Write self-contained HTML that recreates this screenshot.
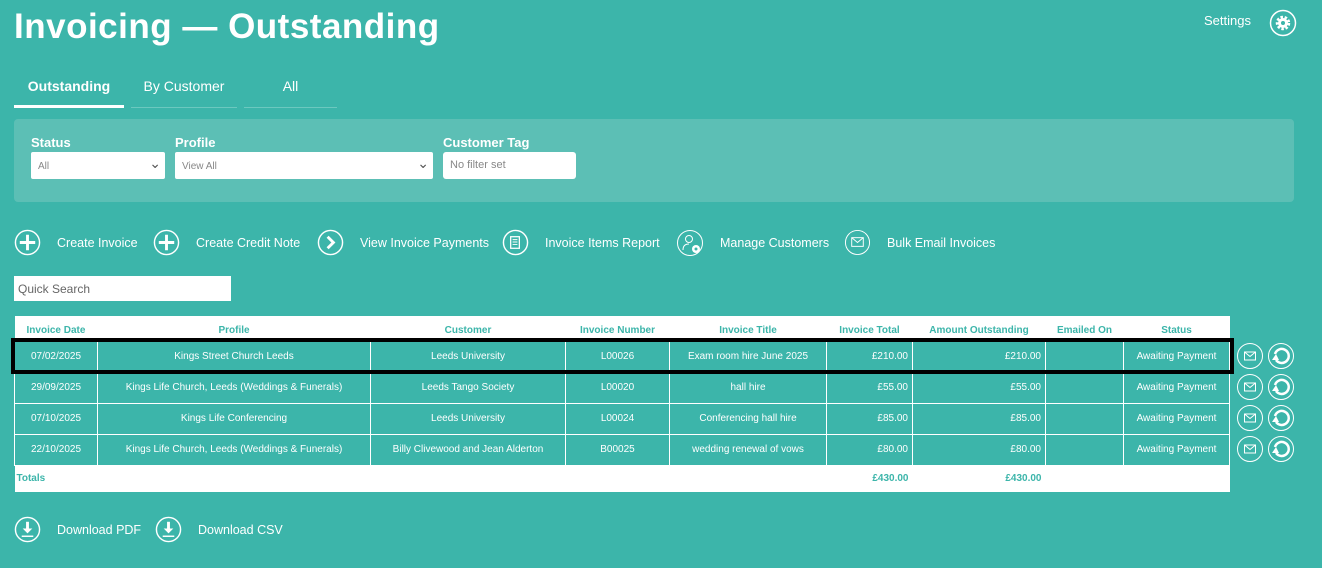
<!DOCTYPE html>
<html><head><meta charset="utf-8"><style>
*{margin:0;padding:0;box-sizing:border-box}
body{width:1322px;height:568px;background:#3cb5aa;font-family:"Liberation Sans",sans-serif;color:#fff;position:relative;overflow:hidden}
.abs{position:absolute}
h1{position:absolute;left:14px;top:7px;font-size:35px;font-weight:bold;letter-spacing:0.5px;color:#fff}
.tab{position:absolute;top:78px;font-size:14px;text-align:center;height:30px;border-bottom:1px solid #6cc8bf}
.panel{position:absolute;left:14px;top:119px;width:1280px;height:83px;background:#5cbfb5;border-radius:4px}
.lbl{position:absolute;top:135px;font-size:13px;font-weight:bold}
.sel{position:absolute;top:152px;height:27px;background:#fff;color:#888;font-size:10px;padding:9px 7px;border-radius:2px}
.act{position:absolute;top:229px;font-size:12.5px;display:flex;align-items:center}
.act svg{margin-right:16px}
table{position:absolute;left:14px;top:316px;width:1216px;border-collapse:collapse;font-size:10px}
th{background:#fff;color:#3cb5aa;font-weight:bold;height:25px;padding-top:4px}
td{border:1px solid #fff;text-align:center;height:31px;color:#fff}
td.r{text-align:right;padding-right:4px}
tr.tot td{background:#fff;color:#3cb5aa;font-weight:bold;height:27px;border:none}
</style></head><body>
<h1>Invoicing — Outstanding</h1>
<div class="abs" style="left:1204px;top:13px;font-size:13px">Settings</div>
<svg class="abs" style="left:1269px;top:9px" width="28" height="28" viewBox="0 0 28 28"><circle cx="14" cy="14" r="12.5" fill="none" stroke="#fff" stroke-width="1.5"/><circle cx="14" cy="14" r="5.5" fill="none" stroke="#fff" stroke-width="3.5" stroke-dasharray="2.3 1.6"/><circle cx="14" cy="14" r="5" fill="#fff"/><circle cx="14" cy="14" r="2" fill="#3cb5aa"/></svg>
<div class="tab" style="left:14px;width:110px;font-weight:bold;border-bottom:3px solid #fff">Outstanding</div>
<div class="tab" style="left:131px;width:106px">By Customer</div>
<div class="tab" style="left:244px;width:93px">All</div>
<div class="panel"></div>
<div class="lbl" style="left:31px">Status</div>
<div class="lbl" style="left:175px">Profile</div>
<div class="lbl" style="left:443px">Customer Tag</div>
<div class="sel" style="left:31px;width:134px">All<span style="position:absolute;right:4px;top:3px;font-size:14px;color:#555">&#8964;</span></div>
<div class="sel" style="left:175px;width:258px">View All<span style="position:absolute;right:4px;top:3px;font-size:14px;color:#555">&#8964;</span></div>
<div class="sel" style="left:443px;width:133px;font-size:11px;padding-top:7px;border-radius:3px">No filter set</div>

<div class="act" style="left:14px"><svg width="27" height="27" viewBox="0 0 28 28"><circle cx="14" cy="14" r="12.5" fill="none" stroke="#fff" stroke-width="1.5"/><path d="M14 6v16M6 14h16" stroke="#fff" stroke-width="3"/></svg>Create Invoice</div>
<div class="act" style="left:153px"><svg width="27" height="27" viewBox="0 0 28 28"><circle cx="14" cy="14" r="12.5" fill="none" stroke="#fff" stroke-width="1.5"/><path d="M14 6v16M6 14h16" stroke="#fff" stroke-width="3"/></svg>Create Credit Note</div>
<div class="act" style="left:317px"><svg width="27" height="27" viewBox="0 0 28 28"><circle cx="14" cy="14" r="12.5" fill="none" stroke="#fff" stroke-width="1.5"/><path d="M11 8l6 6-6 6" fill="none" stroke="#fff" stroke-width="3"/></svg>View Invoice Payments</div>
<div class="act" style="left:502px"><svg width="27" height="27" viewBox="0 0 28 28"><circle cx="14" cy="14" r="12.5" fill="none" stroke="#fff" stroke-width="1.5"/><rect x="9" y="8" width="9" height="12" fill="none" stroke="#fff" stroke-width="1.3"/><path d="M11 11h5M11 13.5h5M11 16h5" stroke="#fff"/></svg>Invoice Items Report</div>
<div class="act" style="left:676px"><svg width="28" height="28" viewBox="0 0 28 28"><circle cx="14" cy="14" r="12.5" fill="none" stroke="#fff" stroke-width="1"/><circle cx="13" cy="10" r="3.5" fill="none" stroke="#fff"/><path d="M7 21c0-5 3-6 6-6" fill="none" stroke="#fff"/><circle cx="20" cy="20" r="4" fill="#fff"/><circle cx="20" cy="20" r="1.5" fill="#3cb5aa"/></svg>Manage Customers</div>
<div class="act" style="left:844px"><svg width="27" height="27" viewBox="0 0 28 28"><circle cx="14" cy="14" r="12.5" fill="none" stroke="#fff" stroke-width="1"/><rect x="8" y="9" width="12" height="9" fill="none" stroke="#fff"/><path d="M8 9l6 5 6-5" fill="none" stroke="#fff"/></svg>Bulk Email Invoices</div>

<div class="abs" style="left:14px;top:276px;width:217px;height:25px;background:#fff;color:#666;font-size:12px;padding:6px 4px">Quick Search</div>

<table>
<tr><th style="width:83px">Invoice Date</th><th style="width:273px">Profile</th><th style="width:195px">Customer</th><th style="width:104px">Invoice Number</th><th style="width:157px">Invoice Title</th><th style="width:86px">Invoice Total</th><th style="width:133px">Amount Outstanding</th><th style="width:78px">Emailed On</th><th>Status</th></tr>
<tr><td>07/02/2025</td><td>Kings Street Church Leeds</td><td>Leeds University</td><td>L00026</td><td>Exam room hire June 2025</td><td class="r">£210.00</td><td class="r">£210.00</td><td></td><td>Awaiting Payment</td></tr>
<tr><td>29/09/2025</td><td>Kings Life Church, Leeds (Weddings &amp; Funerals)</td><td>Leeds Tango Society</td><td>L00020</td><td>hall hire</td><td class="r">£55.00</td><td class="r">£55.00</td><td></td><td>Awaiting Payment</td></tr>
<tr><td>07/10/2025</td><td>Kings Life Conferencing</td><td>Leeds University</td><td>L00024</td><td>Conferencing hall hire</td><td class="r">£85.00</td><td class="r">£85.00</td><td></td><td>Awaiting Payment</td></tr>
<tr><td>22/10/2025</td><td>Kings Life Church, Leeds (Weddings &amp; Funerals)</td><td>Billy Clivewood and Jean Alderton</td><td>B00025</td><td>wedding renewal of vows</td><td class="r">£80.00</td><td class="r">£80.00</td><td></td><td>Awaiting Payment</td></tr>
<tr class="tot"><td style="text-align:left;padding-left:2px">Totals</td><td></td><td></td><td></td><td></td><td class="r">£430.00</td><td class="r">£430.00</td><td></td><td></td></tr>
</table>
<div class="abs" style="left:11px;top:338px;width:1223px;height:36px;border:4px solid #000"></div>

<svg class="abs" style="left:1236px;top:342px" width="62" height="124" viewBox="0 0 62 124">
<g id="ic"><circle cx="14" cy="14" r="12.5" fill="none" stroke="#fff" stroke-width="1"/><rect x="8.5" y="10" width="11" height="8" fill="none" stroke="#fff"/><path d="M8.5 10l5.5 4.5 5.5-4.5" fill="none" stroke="#fff"/><circle cx="45" cy="14" r="12.5" fill="none" stroke="#fff" stroke-width="1"/><path d="M40 18a7 7 0 1 0 -1-6" fill="none" stroke="#fff" stroke-width="2.5"/><path d="M36 18l4-6 3 6z" fill="#fff"/></g>
<use href="#ic" y="31"/><use href="#ic" y="62"/><use href="#ic" y="93"/>
</svg>

<div class="act" style="left:14px;top:516px"><svg width="27" height="27" viewBox="0 0 28 28"><circle cx="14" cy="14" r="12.5" fill="none" stroke="#fff" stroke-width="1.5"/><path d="M14 6v10" stroke="#fff" stroke-width="3"/><path d="M9 13l5 5 5-5z" fill="#fff"/><path d="M8 21h12" stroke="#fff" stroke-width="1.5"/></svg>Download PDF</div>
<div class="act" style="left:155px;top:516px"><svg width="27" height="27" viewBox="0 0 28 28"><circle cx="14" cy="14" r="12.5" fill="none" stroke="#fff" stroke-width="1.5"/><path d="M14 6v10" stroke="#fff" stroke-width="3"/><path d="M9 13l5 5 5-5z" fill="#fff"/><path d="M8 21h12" stroke="#fff" stroke-width="1.5"/></svg>Download CSV</div>
</body></html>
